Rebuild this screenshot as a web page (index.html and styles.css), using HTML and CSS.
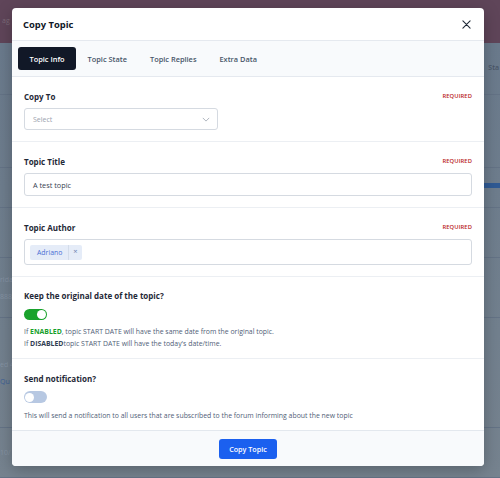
FILE: index.html
```html
<!DOCTYPE html>
<html lang="en">
<head>
<meta charset="utf-8">
<title>Copy Topic</title>
<link rel="stylesheet" href="styles.css">
</head>
<body>
<div class="page">
  <div class="page-top"><span class="bg-text">ag</span></div>
  <div class="page-rows">
    <div class="row r1"><span class="bg-right">Sta</span></div>
    <div class="row r2"></div>
    <div class="row r3"><span class="blue-bar"></span></div>
    <div class="row r4"></div>
    <div class="row r5"><span class="bg-left">rida</span><span class="bg-left">888</span></div>
    <div class="row r6"><span class="bg-left">ed 4</span><span class="bg-left link">Qu</span></div>
    <div class="row r7"><span class="bg-left">10/</span></div>
  </div>
</div>

<div class="overlay">
  <div class="modal">
    <div class="modal-header">
      <h1 class="modal-title">Copy Topic</h1>
      <svg class="close" viewBox="0 0 10 10" width="9" height="9"><path d="M1 1L9 9M9 1L1 9" stroke="#1f2937" stroke-width="1.2" fill="none" stroke-linecap="round"/></svg>
    </div>
    <div class="tabs">
      <span class="tab active">Topic Info</span>
      <span class="tab">Topic State</span>
      <span class="tab">Topic Replies</span>
      <span class="tab">Extra Data</span>
    </div>

    <div class="section">
      <div class="label-row"><span class="label">Copy To</span><span class="required">REQUIRED</span></div>
      <div class="select">
        <span class="placeholder">Select</span>
        <svg viewBox="0 0 10 6" width="8" height="5"><path d="M1 1L5 5L9 1" stroke="#9ca3af" stroke-width="1" fill="none"/></svg>
      </div>
    </div>

    <div class="section">
      <div class="label-row"><span class="label">Topic Title</span><span class="required">REQUIRED</span></div>
      <div class="input">A test topic</div>
    </div>

    <div class="section">
      <div class="label-row"><span class="label">Topic Author</span><span class="required">REQUIRED</span></div>
      <div class="input tags">
        <span class="tag"><span class="tag-name">Adriano</span><span class="tag-x">×</span></span>
      </div>
    </div>

    <div class="section toggles">
      <div class="label-row"><span class="label">Keep the original date of the topic?</span></div>
      <span class="switch on"><span class="knob"></span></span>
      <p class="help">If <b class="en">ENABLED</b>, topic START DATE will have the same date from the original topic.<br>If <b class="dis">DISABLED</b>topic START DATE will have the today's date/time.</p>
    </div>

    <div class="section toggles last">
      <div class="label-row"><span class="label">Send notification?</span></div>
      <span class="switch off"><span class="knob"></span></span>
      <p class="help">This will send a notification to all users that are subscribed to the forum informing about the new topic</p>
    </div>

    <div class="modal-footer">
      <button class="btn">Copy Topic</button>
    </div>
  </div>
</div>
</body>
</html>
```
FILE: styles.css
```css
* { box-sizing: border-box; }
html, body { margin: 0; padding: 0; }
body {
  width: 500px;
  height: 478px;
  overflow: hidden;
  font-family: "Open Sans", "Noto Sans", sans-serif;
  background: #6d7c8d;
  position: relative;
}

/* background page (dimmed) */
.page { width: 500px; height: 478px; display: flex; flex-direction: column; }
.page-top { height: 43px; background: #5f4559; padding: 6px 2px; }
.bg-text { color: #7d6a78; font-size: 7px; }
.page-rows { flex: 1; display: flex; flex-direction: column; background: linear-gradient(#6a7a8c, #76838f); }
.row { border-bottom: 1px solid #647386; position: relative; display: flex; flex-direction: column; justify-content: center; gap: 8px; padding-left: 0; }
.r1 { height: 52px; }
.r2 { height: 73px; }
.r3 { height: 40px; }
.r4 { height: 50px; }
.r5 { height: 60px; }
.r6 { height: 110px; }
.r7 { flex: 1; }
.bg-right { position: absolute; right: 1px; top: 20px; color: #4a5668; font-size: 7px; font-weight: 600; }
.blue-bar { position: absolute; right: 0; top: 15px; width: 20px; height: 5px; background: #2f5a94; }
.bg-left { color: #8593a3; font-size: 7px; align-self: flex-start; }
.bg-left.link { color: #3b5f95; }

/* overlay + modal */
.overlay { position: absolute; inset: 0; }
.modal {
  position: absolute;
  left: 12px; top: 8px;
  width: 472px;
  background: #fff;
  border-radius: 4px;
  overflow: hidden;
  box-shadow: 0 4px 16px rgba(0,0,0,0.25);
}
.modal-header {
  height: 33px;
  display: flex;
  align-items: center;
  justify-content: space-between;
  padding: 0 13px 0 11px;
  border-bottom: 1px solid #e5e9ef;
}
.modal-title { margin: 0; font-size: 9.4px; font-weight: 700; color: #111827; }
.close { display: block; }

.tabs {
  height: 36px;
  background: #f8fafc;
  border-bottom: 1px solid #e5e9ef;
  display: flex;
  align-items: center;
  padding: 0 6px;
}
.tab {
  height: 23px;
  display: flex;
  align-items: center;
  padding: 0 11.5px;
  font-size: 7.4px;
  font-weight: 600;
  color: #475569;
  border-radius: 3px;
}
.tab.active { background: #111827; color: #fff; }

.section {
  padding: 13px 12px 11px;
  border-bottom: 1px solid #eceff3;
  display: flex;
  flex-direction: column;
  gap: 6px;
}
.label-row { display: flex; justify-content: space-between; align-items: center; height: 12px; }
.label { font-size: 8px; font-weight: 700; color: #1f2937; }
.required { font-size: 5.8px; font-weight: 600; color: #b91c1c; letter-spacing: 0.1px; }

.select {
  width: 194px;
  height: 22px;
  border: 1px solid #d5dae1;
  border-radius: 3px;
  display: flex;
  align-items: center;
  justify-content: space-between;
  padding: 0 7px 0 8px;
}
.placeholder { font-size: 7px; color: #9ca3af; }
.select svg { display: block; }

.input {
  height: 23px;
  border: 1px solid #d5dae1;
  border-radius: 3px;
  display: flex;
  align-items: center;
  padding: 0 8px;
  font-size: 7.3px;
  color: #374151;
}
.input.tags { height: 26px; padding: 0 5px; }
.tag {
  display: flex;
  align-items: center;
  height: 15px;
  background: #e5ecf8;
  border-radius: 2px;
  color: #4a6fd4;
}
.tag-name { font-size: 6.9px; padding: 0 6px 0 7px; border-right: 1px solid #d3dcea; height: 15px; display: flex; align-items: center; }
.tag-x { font-size: 7.5px; line-height: 1; color: #6b80b0; padding: 0 4px 0 4px; }

.toggles { gap: 0; padding: 12px 12px 8px; }
.toggles .label-row { margin-bottom: 8px; }
.switch {
  width: 23px;
  height: 11px;
  border-radius: 6px;
  display: flex;
  align-items: center;
  padding: 0 1px;
}
.switch .knob { width: 9px; height: 9px; border-radius: 50%; background: #fff; }
.switch.on { background: #1aa22c; justify-content: flex-end; }
.switch.off { background: #b7c8e2; justify-content: flex-start; height: 12px; }
.help { margin: 6px 0 0; font-size: 6.9px; line-height: 12px; color: #506077; }
.help b { font-weight: 700; }
.help .en { color: #16a02a; }
.help .dis { color: #2f3d52; }
.last .label-row { margin-top: 1px; margin-bottom: 7px; }
.last .help { margin-top: 7px; }
.last { border-bottom: 1px solid #e3e8ee; }

.modal-footer {
  height: 35px;
  background: #f8fafc;
  display: flex;
  align-items: center;
  justify-content: center;
}
.btn {
  width: 58px;
  height: 20px;
  border: 0;
  border-radius: 3px;
  background: #1b60ef;
  color: #fff;
  font-family: inherit;
  font-size: 7.2px;
  font-weight: 600;
  padding: 0;
}
```
